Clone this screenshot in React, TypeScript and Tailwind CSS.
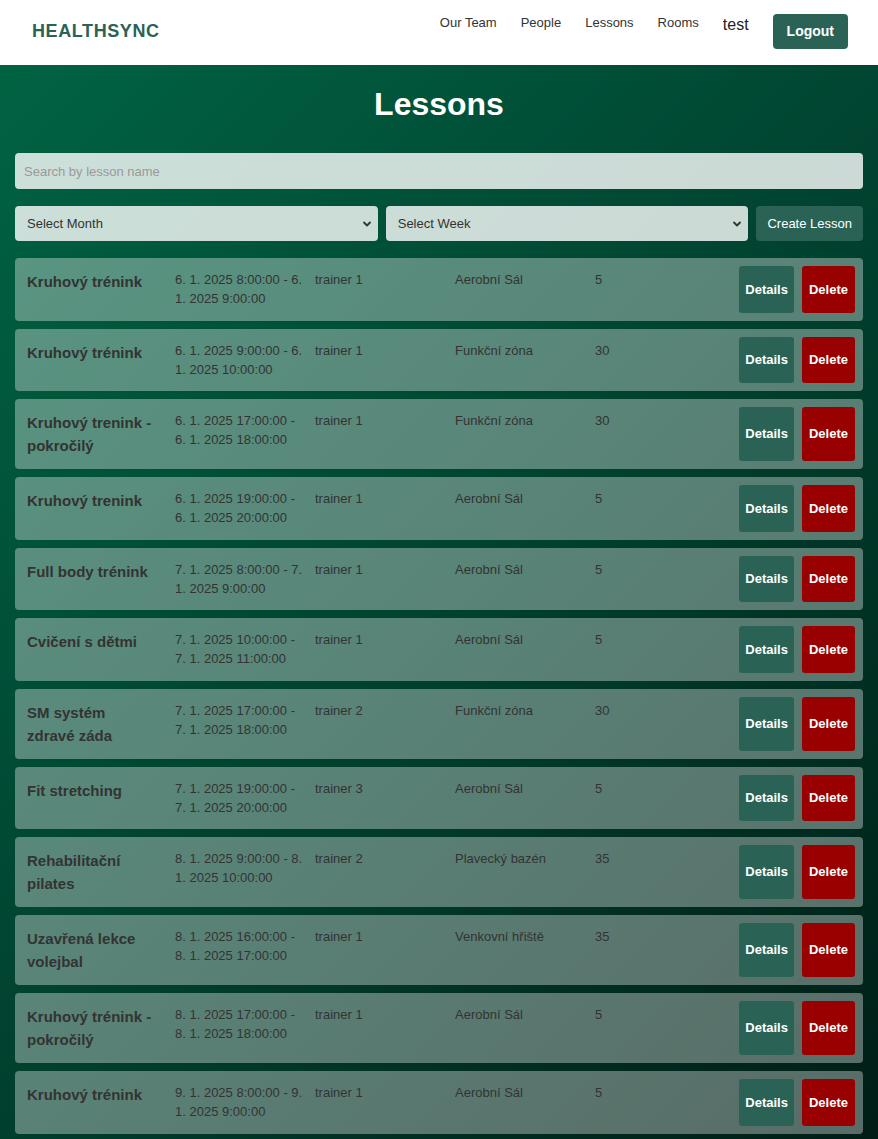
import React from "react";

type Lesson = {
    name: string;
    time: string;
    trainer: string;
    room: string;
    capacity: number;
};

const lessons: Lesson[] = [
    { name: "Kruhový trénink", time: "6. 1. 2025 8:00:00 - 6. 1. 2025 9:00:00", trainer: "trainer 1", room: "Aerobní Sál", capacity: 5 },
    { name: "Kruhový trénink", time: "6. 1. 2025 9:00:00 - 6. 1. 2025 10:00:00", trainer: "trainer 1", room: "Funkční zóna", capacity: 30 },
    { name: "Kruhový trenink - pokročilý", time: "6. 1. 2025 17:00:00 - 6. 1. 2025 18:00:00", trainer: "trainer 1", room: "Funkční zóna", capacity: 30 },
    { name: "Kruhový trenink", time: "6. 1. 2025 19:00:00 - 6. 1. 2025 20:00:00", trainer: "trainer 1", room: "Aerobní Sál", capacity: 5 },
    { name: "Full body trénink", time: "7. 1. 2025 8:00:00 - 7. 1. 2025 9:00:00", trainer: "trainer 1", room: "Aerobní Sál", capacity: 5 },
    { name: "Cvičení s dětmi", time: "7. 1. 2025 10:00:00 - 7. 1. 2025 11:00:00", trainer: "trainer 1", room: "Aerobní Sál", capacity: 5 },
    { name: "SM systém zdravé\u00a0záda", time: "7. 1. 2025 17:00:00 - 7. 1. 2025 18:00:00", trainer: "trainer 2", room: "Funkční zóna", capacity: 30 },
    { name: "Fit stretching", time: "7. 1. 2025 19:00:00 - 7. 1. 2025 20:00:00", trainer: "trainer 3", room: "Aerobní Sál", capacity: 5 },
    { name: "Rehabilitační pilates", time: "8. 1. 2025 9:00:00 - 8. 1. 2025 10:00:00", trainer: "trainer 2", room: "Plavecký bazén", capacity: 35 },
    { name: "Uzavřená lekce volejbal", time: "8. 1. 2025 16:00:00 - 8. 1. 2025 17:00:00", trainer: "trainer 1", room: "Venkovní hřiště", capacity: 35 },
    { name: "Kruhový trénink - pokročilý", time: "8. 1. 2025 17:00:00 - 8. 1. 2025 18:00:00", trainer: "trainer 1", room: "Aerobní Sál", capacity: 5 },
    { name: "Kruhový trénink", time: "9. 1. 2025 8:00:00 - 9. 1. 2025 9:00:00", trainer: "trainer 1", room: "Aerobní Sál", capacity: 5 },
];

const Chevron = () => (
    <svg
        className="pointer-events-none absolute right-[6px] top-1/2 -translate-y-1/2"
        width="10"
        height="10"
        viewBox="0 0 10 10"
        fill="none"
    >
        <path d="M2 3.5 L5 6.5 L8 3.5" stroke="#333" strokeWidth="1.8" strokeLinecap="round" strokeLinejoin="round" />
    </svg>
);

const LessonRow = ({ lesson }: { lesson: Lesson }) => (
    <div className="flex items-stretch rounded-[4px] bg-white/35 p-2">
        <div className="w-[148px] shrink-0 py-1 pl-1 pr-[18px] text-[15px] font-bold leading-[23px] text-[#333]">
            {lesson.name}
        </div>
        <div className="w-[140px] shrink-0 p-1 text-[13px] leading-[19.25px] text-[#333]">{lesson.time}</div>
        <div className="w-[140px] shrink-0 p-1 text-[13px] leading-[19.25px] text-[#333]">{lesson.trainer}</div>
        <div className="w-[140px] shrink-0 p-1 text-[13px] leading-[19.25px] text-[#333]">{lesson.room}</div>
        <div className="flex-1 p-1 text-[13px] leading-[19.25px] text-[#333]">{lesson.capacity}</div>
        <div className="flex gap-2">
            <button className="rounded-[3px] bg-[#2a6355] px-[6px] text-[13px] font-bold text-white">Details</button>
            <button className="rounded-[3px] bg-[#990000] px-[7px] text-[13px] font-bold text-white">Delete</button>
        </div>
    </div>
);

export default function App() {
    return (
        <div className="min-h-screen font-['Liberation_Sans',Arial,sans-serif]">
            {/* Header */}
            <header className="flex h-[65px] justify-between bg-white pl-[32px] pr-[30px]">
                <div className="self-center pb-[2px] text-[18px] font-bold tracking-[0.6px] text-[#2a6355]">HEALTHSYNC</div>
                <nav className="flex items-start gap-6 pt-[14px]">
                    <a className="text-[13px] leading-[18px] text-[#333]">Our Team</a>
                    <a className="text-[13px] leading-[18px] text-[#333]">People</a>
                    <a className="text-[13px] leading-[18px] text-[#333]">Lessons</a>
                    <a className="text-[13px] leading-[18px] text-[#333]">Rooms</a>
                    <span className="text-[16px] leading-[22px] text-[#222]">test</span>
                    <button className="h-[35px] rounded-[4px] bg-[#2a6355] px-[14px] text-[14px] font-bold text-white">
                        Logout
                    </button>
                </nav>
            </header>

            {/* Main */}
            <main className="bg-[linear-gradient(135deg,#016343_0%,#004632_45%,#001d16_100%)] px-[15px] pb-3 pt-[21px]">
                <h1 className="text-center text-[32px] font-bold leading-[37px] text-white">Lessons</h1>

                <input
                    className="mt-[30px] block h-[36px] w-full rounded-[4px] bg-white/80 pl-[9px] text-[13px] text-[#333] outline-none placeholder:text-[#999]"
                    placeholder="Search by lesson name"
                />

                <div className="mt-[17px] flex gap-2">
                    <div className="relative flex-1">
                        <select className="h-[35px] w-full appearance-none rounded-[4px] bg-white/80 pl-3 text-[13px] text-[#333] outline-none">
                            <option>Select Month</option>
                        </select>
                        <Chevron />
                    </div>
                    <div className="relative flex-1">
                        <select className="h-[35px] w-full appearance-none rounded-[4px] bg-white/80 pl-3 text-[13px] text-[#333] outline-none">
                            <option>Select Week</option>
                        </select>
                        <Chevron />
                    </div>
                    <button className="h-[35px] rounded-[4px] bg-[#2a6355] px-[11px] text-[13px] text-white">Create Lesson</button>
                </div>

                <div className="mt-[17px] flex flex-col gap-2">
                    {lessons.map((l, i) => (
                        <LessonRow key={i} lesson={l} />
                    ))}
                </div>
            </main>
        </div>
    );
}
